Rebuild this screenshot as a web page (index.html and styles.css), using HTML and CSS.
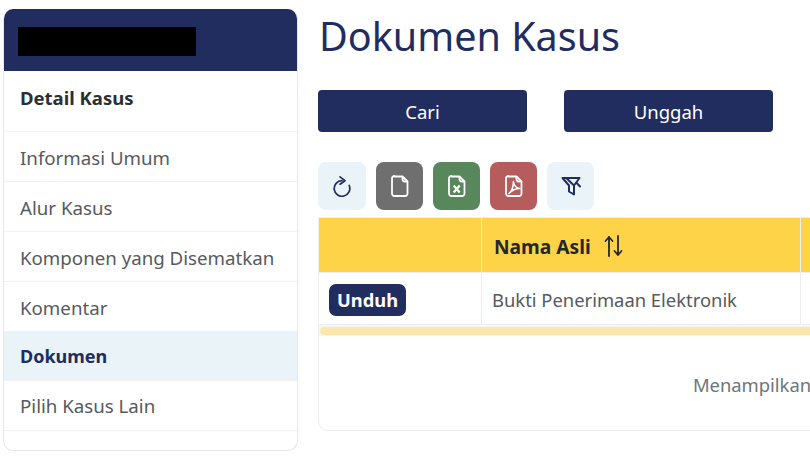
FILE: index.html
```html
<!DOCTYPE html>
<html lang="en">
  <head>
    <meta charset="UTF-8" />
    <meta name="viewport" content="width=device-width, initial-scale=1.0" />
    <title>Dokumen Kasus</title>
    <link rel="stylesheet" href="styles.css">
  </head>
  <body>
    <div class="page">
      <aside class="sidebar">
        <div class="sidebar-head"><div class="redacted"></div></div>
        <div class="sidebar-title">Detail Kasus</div>
        <a class="side-item">Informasi Umum</a>
        <a class="side-item">Alur Kasus</a>
        <a class="side-item">Komponen yang Disematkan</a>
        <a class="side-item">Komentar</a>
        <a class="side-item active">Dokumen</a>
        <a class="side-item">Pilih Kasus Lain</a>
      </aside>

      <main class="content">
        <h1>Dokumen Kasus</h1>
        <div class="actions">
          <button class="action">Cari</button>
          <button class="action">Unggah</button>
        </div>

        <div class="toolbar">
          <button class="tool tool-reload">
            <svg width="20" height="22" viewBox="0 0 20 22" fill="none" stroke="currentColor" stroke-width="1.7" stroke-linecap="round" stroke-linejoin="round">
              <path d="M10 5.700A7.800 7.800 0 1 0 17.200 10.500" />
              <path d="M8 1.800 13 5.700 8 9.200" />
            </svg>
          </button>
          <button class="tool tool-file">
            <svg width="18" height="22" viewBox="0 0 18 22" fill="none" stroke="currentColor" stroke-width="1.8" stroke-linejoin="round">
              <path d="M3.500 1.500h8l5 5v12a2.500 2.500 0 0 1-2.500 2.500h-10.500a2.500 2.500 0 0 1-2.500-2.500v-15a2.500 2.500 0 0 1 2.500-2.500z" />
              <path d="M11.500 2v2.500a2 2 0 0 0 2 2h3" />
            </svg>
          </button>
          <button class="tool tool-excel">
            <svg width="18" height="22" viewBox="0 0 18 22" fill="none" stroke="currentColor" stroke-width="1.8" stroke-linejoin="round">
              <path d="M3.500 1.500h8l5 5v12a2.500 2.500 0 0 1-2.500 2.500h-10.500a2.500 2.500 0 0 1-2.500-2.500v-15a2.500 2.500 0 0 1 2.500-2.500z" />
              <path d="M11.500 2v2.500a2 2 0 0 0 2 2h3" />
              <path d="M5.700 10.500l6 7M11.700 10.500l-6 7" stroke-width="2.200" />
            </svg>
          </button>
          <button class="tool tool-pdf">
            <svg width="18" height="22" viewBox="0 0 18 22" fill="none" stroke="currentColor" stroke-width="1.8" stroke-linejoin="round">
              <path d="M3.500 1.500h8l5 5v12a2.500 2.500 0 0 1-2.500 2.500h-10.500a2.500 2.500 0 0 1-2.500-2.500v-15a2.500 2.500 0 0 1 2.500-2.500z" />
              <path d="M11.500 2v2.500a2 2 0 0 0 2 2h3" />
              <path d="M4 18.500c2.500-2 4.300-6 4.400-12 .5 4 3 6.500 6.600 7-4.500 0-8 1.500-11 5z" stroke-width="1.500" />
            </svg>
          </button>
          <button class="tool tool-filter">
            <svg width="20" height="20" viewBox="0 0 20 20" fill="none" stroke="currentColor" stroke-width="2" stroke-linejoin="round" stroke-linecap="round">
              <path d="M1.500 2h17l-5.500 7.500v9l-5-3v-6z" />
              <path d="M5.500 2.200 13 9.500M15.500 6.800l3.500 3.700" />
            </svg>
          </button>
        </div>

        <div class="panel">
          <div class="table-row table-head">
            <div class="cell cell-action"></div>
            <div class="cell cell-name">
              Nama Asli
              <svg class="sort" width="22" height="24" viewBox="0 0 22 24" fill="none" stroke="currentColor" stroke-width="1.800" stroke-linecap="round" stroke-linejoin="round">
                <path d="M6 22V3M2.500 7 6 3l3.500 4" />
                <path d="M15 2v19M11.500 17 15 21l3.500-4" />
              </svg>
            </div>
            <div class="cell cell-rest"></div>
          </div>
          <div class="table-row table-body">
            <div class="cell cell-action"><span class="download">Unduh</span></div>
            <div class="cell cell-name">Bukti Penerimaan Elektronik</div>
            <div class="cell cell-rest"></div>
          </div>
          <div class="scrollbar"><div class="scroll-thumb"></div></div>
          <div class="panel-foot">Menampilkan</div>
        </div>
      </main>
    </div>
  </body>
</html>
```

FILE: styles.css
```css
html,
body {
  margin: 0;
  height: 100%;
  overflow: hidden;
  background: #fff;
}
body {
  font-family: "Noto Sans", "Open Sans", Arial, sans-serif;
  color: #212529;
}
.page {
  display: flex;
  align-items: flex-start;
  gap: 20px;
  padding: 9px 0 0 3px;
  width: 1400px;
}
.sidebar {
  width: 293px;
  height: 441px;
  flex: none;
  border: 1px solid #e6e8ea;
  border-top: 0;
  border-radius: 10px;
  overflow: hidden;
}
.sidebar-head {
  height: 62px;
  background: #222d5f;
  padding: 18px 0 0 14px;
  box-sizing: border-box;
}
.redacted {
  width: 178px;
  height: 29px;
  background: #000;
}
.sidebar-title {
  height: 61px;
  box-sizing: border-box;
  padding: 15px 16px 0;
  font-size: 18.500px;
  font-weight: 700;
  line-height: 24px;
  color: #2c2f33;
  border-bottom: 1px solid #f0f1f2;
}
.side-item {
  display: block;
  height: 50px;
  box-sizing: border-box;
  padding: 14px 16px 0;
  font-size: 18.700px;
  line-height: 24px;
  color: #555a60;
  border-bottom: 1px solid #f0f1f2;
}
.side-item:last-child {
  padding-top: 13px;
}
.side-item.active {
  height: 49px;
  background: #eaf3f7;
  color: #222d5f;
  font-weight: 700;
  font-size: 18px;
  padding-top: 12px;
}
.content {
  flex: none;
  width: 868px;
}
h1 {
  margin: 0;
  padding-left: 1px;
  font-size: 39.500px;
  font-weight: 400;
  line-height: 54px;
  color: #222d5f;
}
.actions {
  display: flex;
  gap: 37px;
  margin-top: 27px;
}
.action {
  width: 209px;
  height: 42px;
  border: none;
  border-radius: 4px;
  background: #222d5f;
  color: #fff;
  font-family: inherit;
  font-size: 18.500px;
}
.toolbar {
  display: flex;
  gap: 10px;
  margin-top: 30px;
}
.tool {
  width: 47px;
  height: 48px;
  padding: 0;
  border: none;
  border-radius: 8px;
  display: flex;
  align-items: center;
  justify-content: center;
}
.tool-reload {
  width: 48px;
}
.tool-reload,
.tool-filter {
  background: #eaf3f7;
  color: #222d5f;
}
.tool-file {
  background: #6f6f6f;
  color: #fff;
}
.tool-excel {
  background: #58875b;
  color: #fff;
}
.tool-pdf {
  background: #b65c5c;
  color: #fff;
}
.panel {
  margin-top: 7px;
  height: 214px;
  box-sizing: border-box;
  border: 1px solid #eceeef;
  border-radius: 0 0 10px 10px;
}
.table-row {
  display: flex;
}
.table-head {
  height: 55px;
  background: #ffd347;
  font-size: 19.200px;
  font-weight: 700;
  color: #23272b;
  border-bottom: 1px solid #eceeef;
  box-sizing: border-box;
}
.table-body {
  height: 52px;
  font-size: 18.400px;
  color: #555a60;
  border-bottom: 1px solid #eceeef;
  box-sizing: border-box;
}
.cell {
  display: flex;
  align-items: center;
  box-sizing: border-box;
  border-right: 1px solid #eceeef;
}
.table-head .cell,
.table-body .cell {
  padding-top: 2px;
}
.cell-action {
  width: 163px;
  padding-left: 10px;
}
.cell-name {
  width: 319px;
  padding-left: 10px;
}
.table-head .cell-name {
  padding-left: 12px;
  gap: 12px;
}
.cell-rest {
  flex: 1;
}
.download {
  background: #222d5f;
  color: #fff;
  font-weight: 700;
  font-size: 18.300px;
  border-radius: 7px;
  padding: 2px 8px;
  line-height: 28px;
}
.scrollbar {
  height: 11px;
  padding: 2px 0 0 1px;
  box-sizing: border-box;
  background: #f6f6f6;
}
.scroll-thumb {
  height: 8px;
  border-radius: 4px;
  background: #fbe6ae;
}
.panel-foot {
  text-align: center;
  font-size: 18.400px;
  color: #6c757d;
  padding-top: 37px;
  line-height: 24px;
}
```
